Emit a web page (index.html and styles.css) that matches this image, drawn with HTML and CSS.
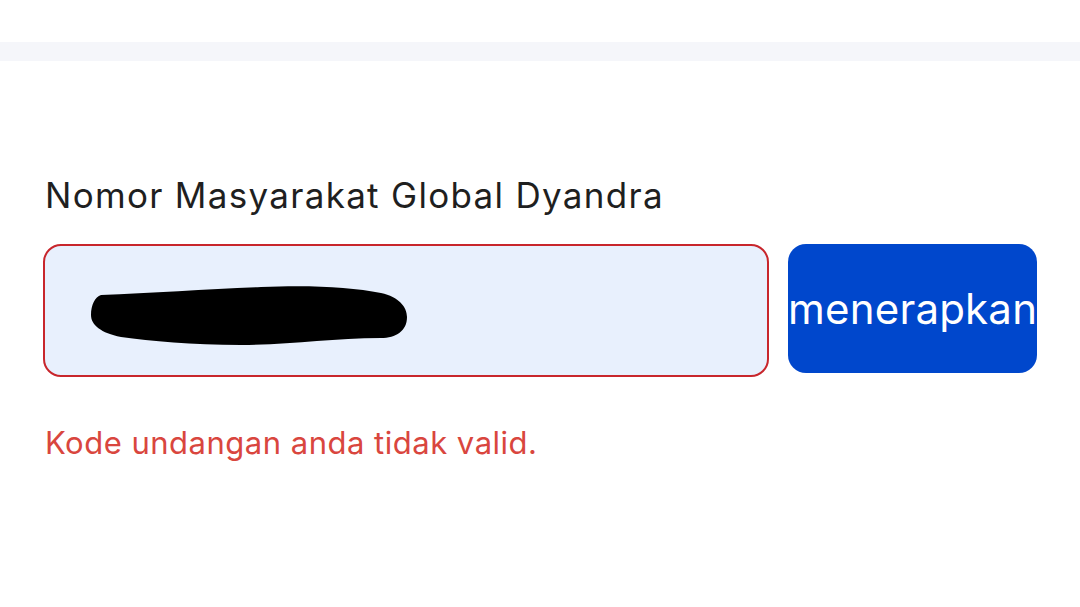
FILE: index.html
```html
<!DOCTYPE html>
<html>
  <head>
    <meta name='viewport' content='width=device-width, initial-scale=1'>
    <title>Kode Undangan</title>
    <link rel="stylesheet" href="styles.css">
  </head>
<body>

<div class='topbar'></div>

<form class='invite' onsubmit="return false">
  <label class='label' for='code'>Nomor Masyarakat Global Dyandra</label>
  <div class='row'>
    <div class='field'>
      <input type='text' id='code' name='code' value=''>
      <!-- redacted in the screenshot -->
      <svg class='scribble' width='318' height='62' viewBox='0 0 318 62'>
        <path d='M10 10 C60 8 120 4 170 2 C220 0 260 2 290 8 C308 12 316 22 316 32 C316 46 305 53 290 53 C240 53 200 60 150 60 C100 60 60 56 30 52 C10 48 0 40 0 30 C0 20 4 12 10 10 Z' fill='#000'/>
      </svg>
    </div>
    <button type='button' class='apply'>menerapkan</button>
  </div>
  <p class='error'>Kode undangan anda tidak valid.</p>
</form>

</body>
</html>
```

FILE: styles.css
```css
* {font-family: Inter, "Noto Sans", sans-serif; box-sizing: border-box;}

body {margin: 0; background-color: #fff;}

.topbar {margin-top: 42px; height: 19px; background-color: #f5f6fa;}

.invite {padding: 0 43px; margin-top: 112px;}

.label {display: block; font-size: 35px; letter-spacing: 1.3px; color: #1f1f1f; margin-left: 2px; line-height: 44px;}

.row {display: flex; gap: 19px; margin-top: 27px;}

.field {position: relative; width: 726px; height: 133px; border: 2px solid #c8262c; border-radius: 18px; background-color: #e8f0fd;}
.field input {width: 100%; height: 100%; border: none; background: none; outline: none; padding: 0 46px; font-size: 30px;}
.scribble {position: absolute; left: 46px; top: 39px;}

.apply {width: 249px; height: 129px; border: none; border-radius: 18px; background-color: #0047cc; color: #fff; font-size: 42px; letter-spacing: 0.2px; padding: 0; white-space: nowrap; cursor: pointer;}

.error {margin: 47px 0 0 2px; font-size: 31px; letter-spacing: 0.5px; color: #d9463e;}
```
